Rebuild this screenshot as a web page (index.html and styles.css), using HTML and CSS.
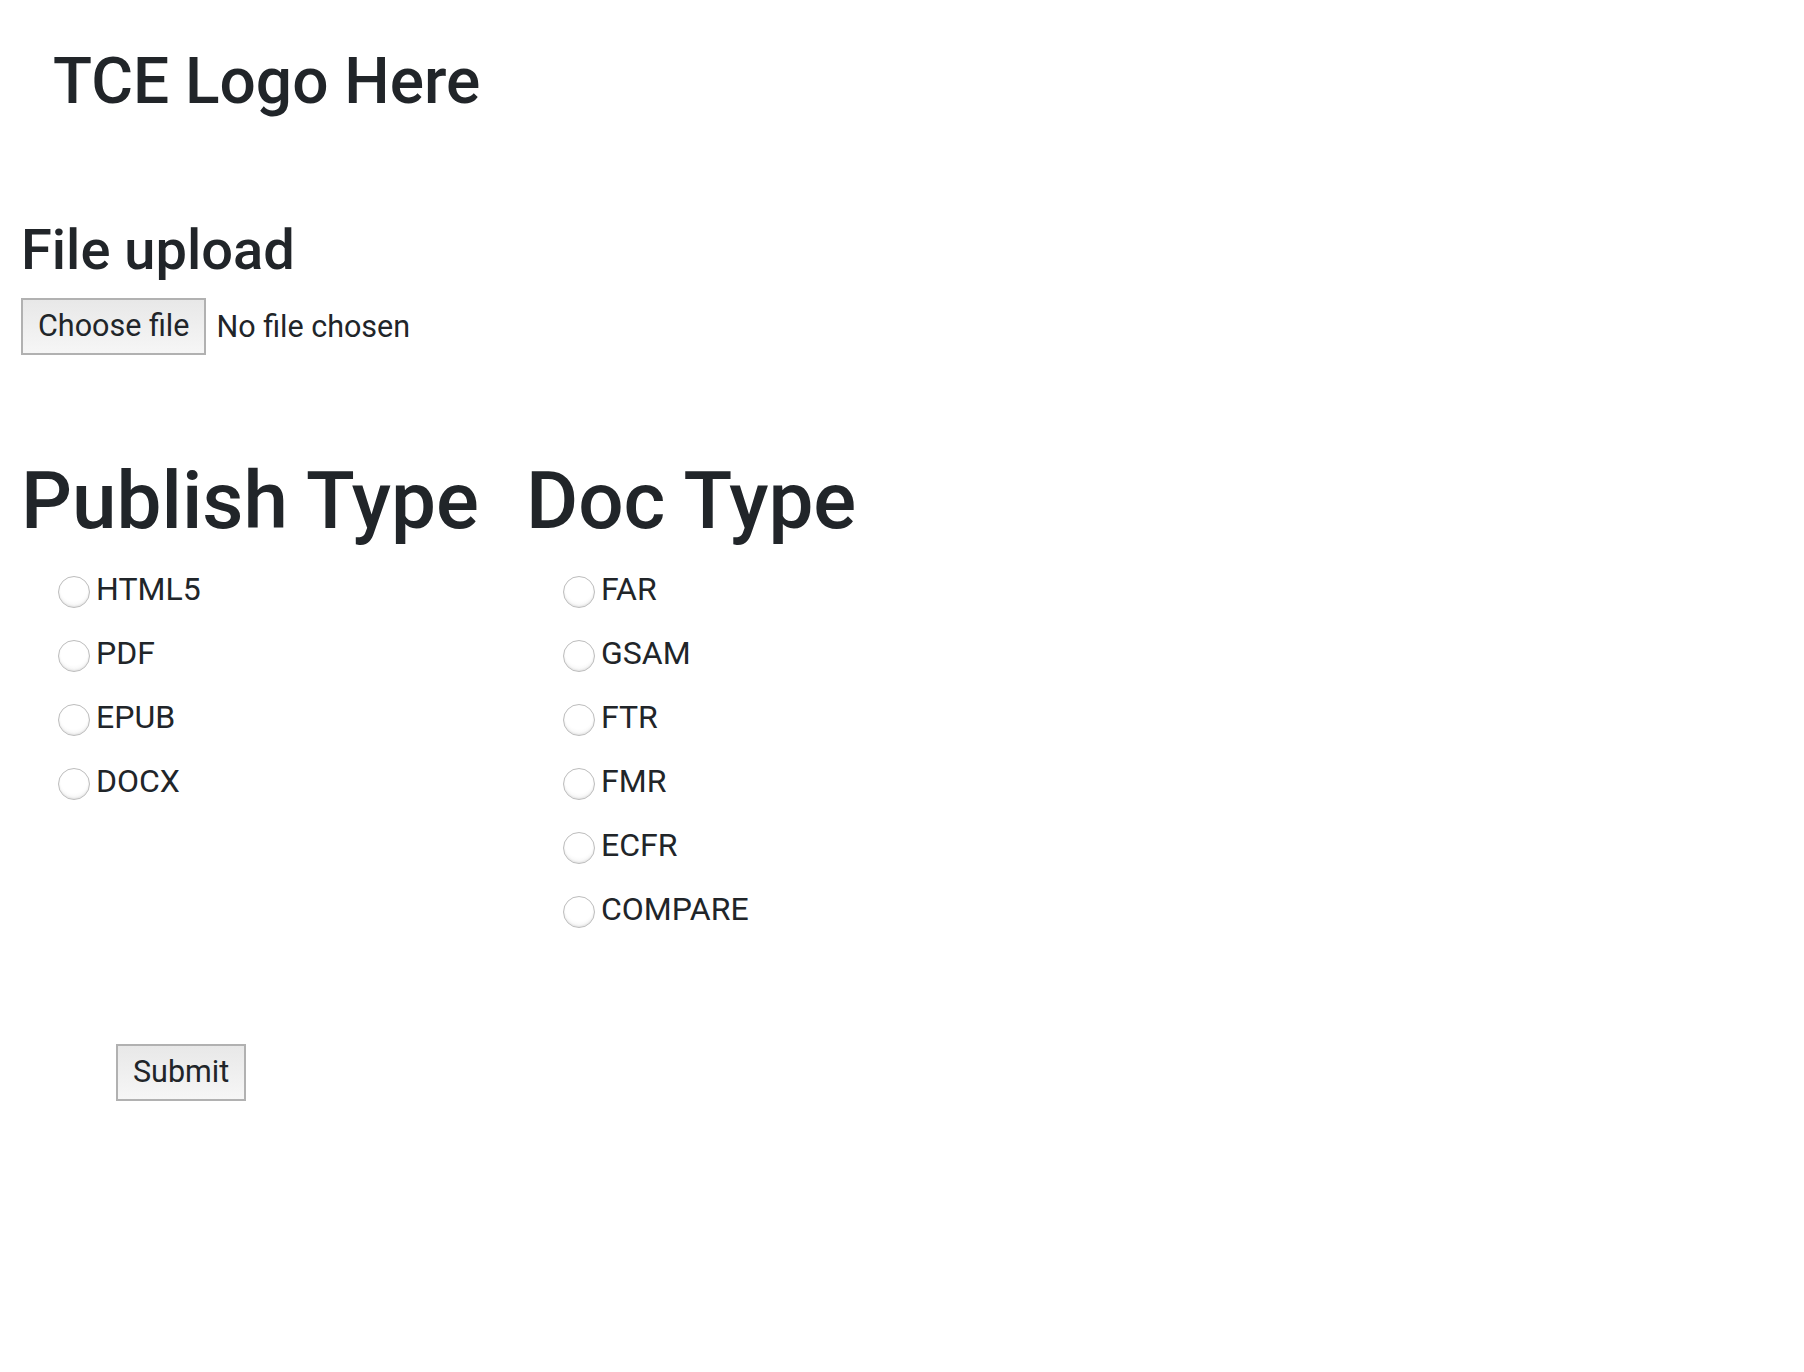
FILE: index.html
```html
<!DOCTYPE html>
<html lang="en">
<head>
<meta charset="utf-8">
<title>TCE Upload</title>
<link rel="stylesheet" href="styles.css">
</head>
<body>
<div class="page">
  <header class="header">
    <h2 class="logo">TCE Logo Here</h2>
  </header>
  <form class="form">
    <section class="upload">
      <h3 class="upload-title">File upload</h3>
      <div class="file-row">
        <button type="button" class="btn">Choose file</button>
        <span class="file-name">No file chosen</span>
      </div>
    </section>
    <div class="columns">
      <fieldset class="col col-publish">
        <h1 class="col-title">Publish Type</h1>
        <label class="check"><input type="radio" name="publish" class="radio"><span>HTML5</span></label>
        <label class="check"><input type="radio" name="publish" class="radio"><span>PDF</span></label>
        <label class="check"><input type="radio" name="publish" class="radio"><span>EPUB</span></label>
        <label class="check"><input type="radio" name="publish" class="radio"><span>DOCX</span></label>
      </fieldset>
      <fieldset class="col col-doc">
        <h1 class="col-title">Doc Type</h1>
        <label class="check"><input type="radio" name="doc" class="radio"><span>FAR</span></label>
        <label class="check"><input type="radio" name="doc" class="radio"><span>GSAM</span></label>
        <label class="check"><input type="radio" name="doc" class="radio"><span>FTR</span></label>
        <label class="check"><input type="radio" name="doc" class="radio"><span>FMR</span></label>
        <label class="check"><input type="radio" name="doc" class="radio"><span>ECFR</span></label>
        <label class="check"><input type="radio" name="doc" class="radio"><span>COMPARE</span></label>
      </fieldset>
    </div>
    <div class="submit-row">
      <button type="submit" class="btn btn-submit">Submit</button>
    </div>
  </form>
</div>
</body>
</html>
```

FILE: styles.css
```css
html, body {
  margin: 0;
  padding: 0;
  background: #ffffff;
}

body {
  font-family: Roboto, "Liberation Sans", sans-serif;
  color: #212529;
  font-size: 32px;
  line-height: 1.5;
}

.page {
  padding: 44px 0 0 21px;
}

.header {
  padding-left: 32px;
}

.logo {
  margin: 0;
  font-size: 64px;
  font-weight: 500;
  line-height: 1.2;
}

.upload {
  margin-top: 96px;
}

.upload-title {
  margin: 0 0 14px;
  font-size: 56px;
  font-weight: 500;
  line-height: 1.2;
}

.file-row {
  display: flex;
  align-items: center;
  gap: 10px;
}

.btn {
  font-family: inherit;
  font-size: 30.5px;
  color: #212529;
  height: 57px;
  padding: 0 15px;
  border: 2px solid #b1b1b1;
  border-radius: 0;
  background: linear-gradient(#e8e8e8, #f6f6f6);
  line-height: 1;
}

.file-name {
  font-size: 30.5px;
}

.columns {
  display: flex;
  margin-top: 98px;
}

.col {
  border: 0;
  margin: 0;
  padding: 0;
  min-width: 0;
}

.col-publish {
  width: 505px;
}

.col-title {
  margin: 0 0 16px;
  font-size: 80px;
  font-weight: 500;
  line-height: 1.2;
}

.check {
  display: flex;
  align-items: center;
  height: 48px;
  margin: 0 0 16px 37px;
}

.radio {
  appearance: none;
  -webkit-appearance: none;
  width: 32px;
  height: 32px;
  margin: 6px 6px 0 0;
  border-radius: 50%;
  border: 1.5px solid #bdbdbd;
  background: radial-gradient(circle at 50% 35%, #ffffff 55%, #ececec 100%);
  box-shadow: inset 0 -1px 2px rgba(0,0,0,0.08);
  flex: none;
}

.submit-row {
  margin-top: 95px;
  padding-left: 95px;
}
```
